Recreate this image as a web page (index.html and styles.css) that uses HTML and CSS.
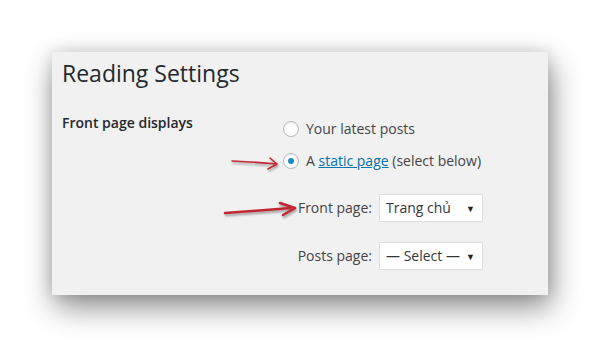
FILE: index.html
```html
<!doctype html>
<html>
  <head>
    <meta charset="utf-8">
    <title>Reading Settings</title>
    <link rel="stylesheet" href="styles.css">
  </head>
  <body>

    <div class="page">
      <div class="wrap">
        <h1>Reading Settings</h1>

        <div class="form-table">
          <div class="th">Front page displays</div>
          <div class="td">
            <label class="choice"><span class="radio"></span>Your latest posts</label>
            <label class="choice"><span class="radio checked"></span>A&nbsp;<a href="#">static page</a>&nbsp;(select below)</label>

            <div class="page-selects">
              <label>Front page:</label>
              <span class="select">Trang chủ</span>
              <label>Posts page:</label>
              <span class="select">— Select —</span>
            </div>
          </div>
        </div>
      </div>

      <svg class="arrows" width="600" height="347" viewBox="0 0 600 347">
        <path class="thin" d="M232 161 Q255 162 277 164 M270 158 L277 164 L268 169"/>
        <path d="M225 213 Q255 211 290 208 M280 203 L295 208 L283 215"/>
      </svg>
    </div>

  </body>
</html>
```

FILE: styles.css
```css
body {
  background: #fff;
  color:      #444;
  font:       14px/1.4 "Open Sans", "Noto Sans", Arial, sans-serif;
  margin:     0;
  padding:    0;
}

.page {
  height:   347px;
  padding:  52px 0 0 52px;
  position: relative;
  box-sizing: border-box;
}

.wrap {
  background: #f1f1f1;
  box-shadow: 3px 12px 28px rgba(0, 0, 0, 0.45), 0 0 14px rgba(0, 0, 0, 0.12);
  box-sizing: border-box;
  height:     243px;
  padding:    6px 10px 0;
  width:      496px;
}

h1 {
  color:       #23282d;
  font-size:   23px;
  font-weight: 400;
  line-height: 29px;
  margin:      0;
  padding:     1px 0 0;
}

.form-table {
  display: grid;
  grid-template-columns: 221px 1fr;
  margin-top: 25px;
}

.th {
  color:       #23282d;
  font-weight: 600;
  line-height: 20px;
}

.td {
  display:        flex;
  flex-direction: column;
  padding-top:    5px;
}

.choice {
  align-items: center;
  display:     flex;
  height:      22px;
  margin-bottom: 10px;
  white-space: nowrap;
}

.radio {
  background:    #fff;
  border:        1px solid #b4b9be;
  border-radius: 50%;
  box-shadow:    inset 0 1px 2px rgba(0, 0, 0, 0.1);
  box-sizing:    border-box;
  display:       inline-block;
  height:        16px;
  margin-right:  7px;
  position:      relative;
  width:         16px;
}
.radio.checked::after {
  background:    #1e8cbe;
  border-radius: 50%;
  content:       "";
  height:        6px;
  left:          4px;
  position:      absolute;
  top:           4px;
  width:         6px;
}

a {
  color: #0073aa;
}

.page-selects {
  align-items: center;
  display:     grid;
  grid-template-columns: 96px 104px;
  row-gap:     20px;
  margin-top:  12px;
}
.page-selects label {
  padding-right: 7px;
  text-align:    right;
}

.select {
  align-items: center;
  background:  #fff;
  border:      1px solid #ddd;
  box-sizing:  border-box;
  color:       #32373c;
  display:     flex;
  height:      28px;
  padding:     0 0 0 6px;
  position:    relative;
  white-space: nowrap;
}
.select::after {
  content:   "▼";
  color:     #222;
  font-size: 9px;
  position:  absolute;
  right:     7px;
  top:       8px;
}

.arrows {
  filter:   drop-shadow(1px 2px 1px rgba(0, 0, 0, 0.35));
  left:     0;
  position: absolute;
  top:      0;
}
.arrows path {
  fill:            none;
  stroke:          #c1272d;
  stroke-linecap:  round;
  stroke-linejoin: round;
  stroke-width:    2.5;
}
.arrows path.thin {
  stroke-width: 1.6;
}
```
